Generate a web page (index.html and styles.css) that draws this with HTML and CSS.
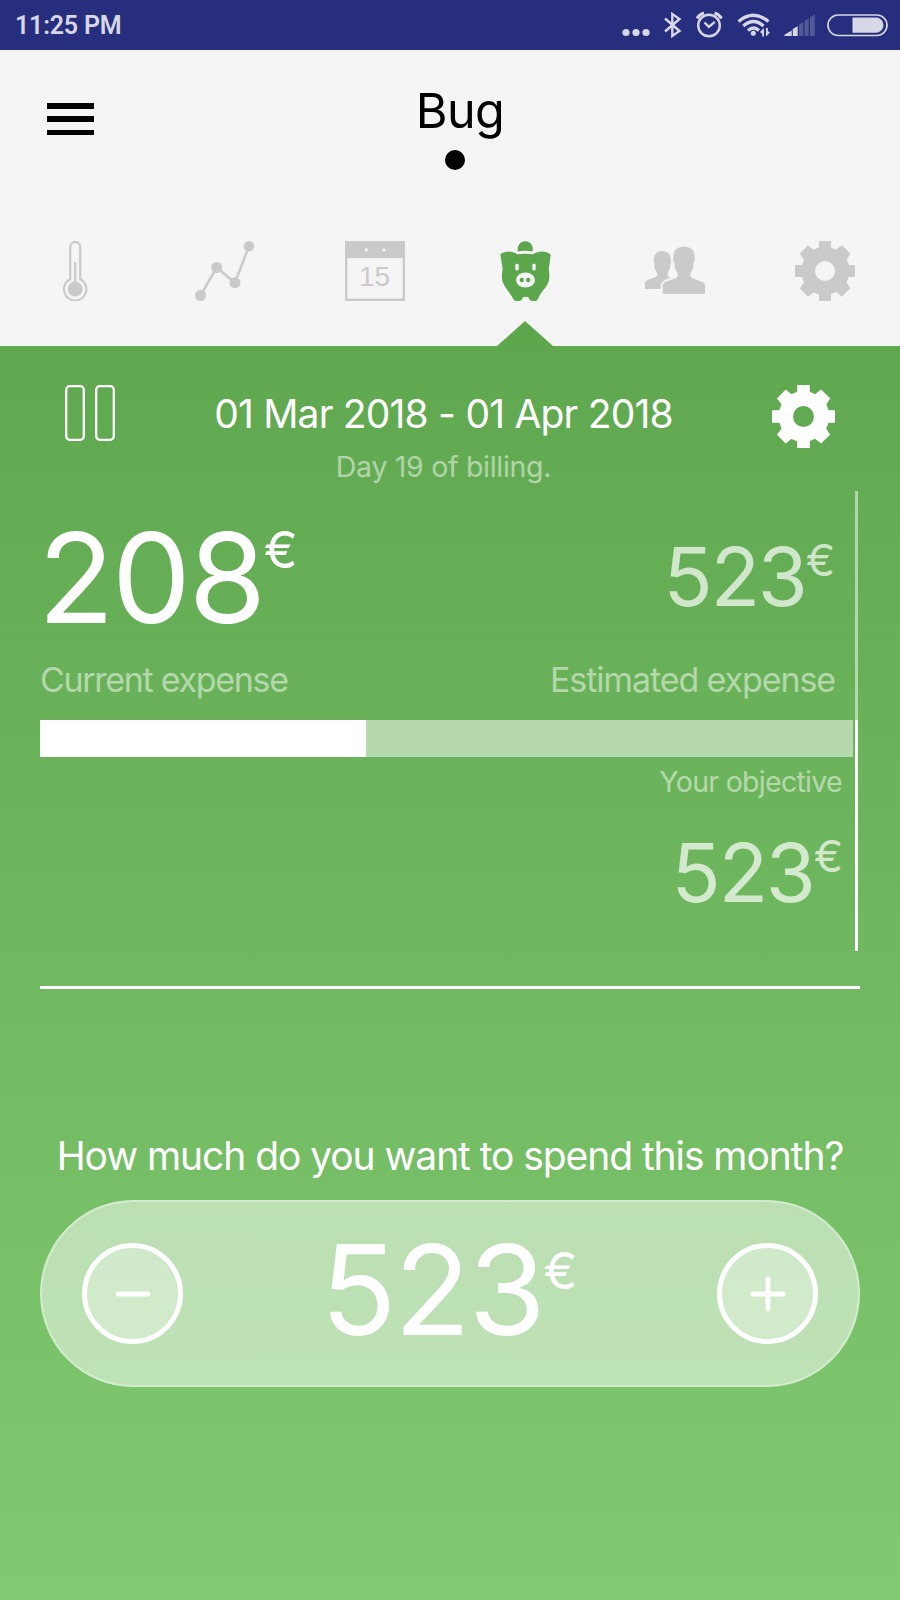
FILE: index.html
```html
<!DOCTYPE html>
<html lang="en">
<head>
  <meta charset="UTF-8" />
  <meta name="viewport" content="width=device-width, initial-scale=1" />
  <title>Bug - Expenses</title>
  <link rel="stylesheet" href="styles.css">
</head>
<body>

  <svg class="sprite" width="0" height="0">
    <symbol id="gear" viewBox="0 0 60 60">
      <path fill-rule="evenodd" d="M24 0h12v6.500l5 2.200 5.800-4.400 8.700 8.500-3.700 5.600 2 5.600H60v12h-6.200l-2.200 5.500 3.700 5.800-8.500 8.500-5.800-4.700-5 2.200V60H24v-6.400l-5.500-2.200-5.500 4.300-8.300-8.300 4.400-5.900L7 36H0V24h7l2.100-5.600-4.400-5.600L13 4.300l5.500 4.400L24 6.500zM30 20a10 10 0 1 0 0 20a10 10 0 0 0 0-20z"/>
    </symbol>
  </svg>

  <div class="status-bar">
    <div class="clock">11:25 PM</div>
    <svg class="status-icons" viewBox="0 0 280 50" width="280" height="50">
      <g fill="#d6d7e7">
        <circle cx="6" cy="32.500" r="3.600"/>
        <circle cx="16" cy="32.500" r="3.600"/>
        <circle cx="26" cy="32.500" r="3.600"/>
      </g>
      <g fill="none" stroke="#d6d7e7" stroke-width="2.400">
        <path d="M45 18.500l14.500 12.500-7.200 5V14l7.200 5L45 31.500"/>
        <circle cx="89" cy="25.500" r="10.800"/>
        <path d="M84.500 22.500l4.300 4.300 6-5"/>
        <path stroke-width="3" d="M77 18.500q2-4 7-5.500M101.500 18.500q-2-4-7-5.500"/>
        <path stroke-width="3.300" d="M118.500 21.500q14.500-12.500 30 0M123.300 26q10.200-9 20.200 0M128 30.500q5.500-5 11 0"/>
      </g>
      <circle cx="133.300" cy="33.300" r="2.500" fill="#d6d7e7"/>
      <path fill="#d6d7e7" d="M144 28v8.500h-1.800V34L140 32zM146 36.500V28h1.800v3l2.200 1.500zM164.500 36v-1.200l7.200-4.200V36zM172.800 36v-7l4.900-2.700V36z"/>
      <path fill="#535897" d="M179 36V24.500l4.200-2.300V36zM184.500 36V21l4.200-2.500V36zM190 36V17.500l4.800-3V36z"/>
      <rect x="208" y="15" width="59" height="20.500" rx="10.200" fill="none" stroke="#d6d7e7" stroke-width="1.700"/>
      <path fill="#d6d7e7" d="M232.500 17.500H257a7.700 7.700 0 0 1 0 15.200h-24.500z"/>
    </svg>
  </div>

  <div class="header">
    <div class="title-row">
      <div class="menu">
        <span></span>
        <span></span>
        <span></span>
      </div>
      <div class="title">
        <h1>Bug</h1>
        <div class="page-dot"></div>
      </div>
    </div>

    <div class="tabs">
      <div class="tab">
        <svg viewBox="0 0 60 60" width="60" height="60">
          <path fill="none" stroke="#cacaca" stroke-width="2.200" d="M25.200 38.300V6a5 5 0 0 1 10 0v32.300a11.200 11.200 0 1 1-10 0z"/>
          <path fill="none" stroke="#cacaca" stroke-width="2.200" d="M30.200 21v25"/>
          <circle cx="30.200" cy="48" r="7.500" fill="#cacaca"/>
        </svg>
      </div>
      <div class="tab">
        <svg viewBox="0 0 60 60" width="60" height="60">
          <path fill="none" stroke="#cacaca" stroke-width="2.500" d="M5.500 54.500l16.200-28 18.200 15.200L54 5.300"/>
          <g fill="#cacaca">
            <circle cx="5.500" cy="54.500" r="5.500"/>
            <circle cx="21.700" cy="26.500" r="5.500"/>
            <circle cx="40" cy="41.700" r="5.500"/>
            <circle cx="54" cy="5.300" r="5.300"/>
          </g>
        </svg>
      </div>
      <div class="tab">
        <svg viewBox="0 0 60 60" width="60" height="60">
          <rect x="1.200" y="1.200" width="57.600" height="57.600" fill="none" stroke="#cacaca" stroke-width="2.400"/>
          <path fill="#cacaca" d="M0 0h60v17H0z"/>
          <path fill="#f5f5f5" d="M20 7.500h2.800v2.800H20zM37.500 7.500h2.800v2.800h-2.800z"/>
          <text class="calendar-day" x="29.500" y="44.500" text-anchor="middle">15</text>
        </svg>
      </div>
      <div class="tab active">
        <svg viewBox="0 0 60 60" width="60" height="60">
          <g fill="#5ca64c">
            <path d="M22.700 10.500C22 4 25.500.2 30.300.2s8.300 3.800 7.500 10.300q-7.500-1.300-15.100 0z"/>
            <path d="M5.300 13.500c5-4 12-3.700 17.200-.3q7.800-1 15.500 0c5.500-3.600 12.500-3.700 17.700.4L53.700 28c.8 4 1 8 0 12.500-1.500 5-6 8.500-9.400 14.500-1.200 2.500-1.800 5-4.300 5-3.500.2-5.700-.2-6.500-3.700q-3-1-5.700 0c-.5 3.500-3 3.900-6.300 3.700-2.500 0-3.500-2.500-5-5-3.500-5.500-7.500-9.500-9-14.500-1-4.500-.8-8.500.2-12.500z"/>
          </g>
          <g fill="#f5f5f5">
            <rect x="20.300" y="22.800" width="3.400" height="6.600" rx="1.300"/>
            <rect x="37.300" y="22.800" width="3.400" height="6.600" rx="1.300"/>
            <ellipse cx="30.500" cy="39" rx="9.500" ry="7.500"/>
          </g>
          <circle cx="26.800" cy="39" r="2.200" fill="#5ca64c"/>
          <circle cx="33.200" cy="39" r="2.200" fill="#5ca64c"/>
        </svg>
      </div>
      <div class="tab">
        <svg viewBox="0 0 60 60" width="60" height="60">
          <path fill="#cacaca" d="M0 48v-6c0-3 7-4.500 10.500-6 2-1 2.200-2.500 1-5-1.500-2.500-2.300-5-2.200-8C8 21 8.700 19 9 17c.3-4.500 4-7 8.300-7s8 2.500 8.300 7c.1 2 1 4-.3 6.500 0 3-.8 5.500-2 7.500-1.300 3-.8 4.500 2.200 6-5 1-8.500 3.500-9.700 6V48z"/>
          <path fill="#cacaca" d="M18.500 53q-.7 0-.7-1v-8c0-3.500 9-5 13-7 2.500-1.300 2.500-3.500 1-6.500-1.500-2.700-2.200-5.500-2.500-9-1.500-2.500-1.200-4-.8-7 0-5.500 4.500-9 10.500-9S49.500 9 49.500 14.500c.3 3 .8 4.500-.8 7-.3 3.500-1 6.300-2.500 9-1.500 3-1.200 5.200 1 6.500 4 2 12.800 3.500 12.800 7v8q0 1-1 1z"/>
        </svg>
      </div>
      <div class="tab">
        <svg width="60" height="60" fill="#cacaca"><use href="#gear"/></svg>
      </div>
    </div>
  </div>

  <div class="content">
    <div class="period">
      <svg class="pause" viewBox="0 0 50 56" width="50" height="56" fill="none" stroke="#fff" stroke-width="2.300">
        <rect x="1.200" y="1.200" width="17.600" height="53.600" rx="3.500"/>
        <rect x="31.200" y="1.200" width="17.600" height="53.600" rx="3.500"/>
      </svg>
      <div class="period-text">
        <div class="dates">01 Mar 2018 - 01 Apr 2018</div>
        <div class="day">Day 19 of billing.</div>
      </div>
      <svg class="settings" width="63" height="63" fill="#fff"><use href="#gear"/></svg>
    </div>

    <div class="expenses">
      <div class="current">
        <div class="amount big"><span class="number">208</span><span class="euro">€</span></div>
        <div class="label">Current expense</div>
      </div>
      <div class="estimated">
        <div class="amount"><span class="number">523</span><span class="euro">€</span></div>
        <div class="label">Estimated expense</div>
      </div>
    </div>

    <div class="objective">
      <div class="bar">
        <div class="bar-fill" style="width: 40.100%"></div>
      </div>
      <div class="objective-label">Your objective</div>
      <div class="amount"><span class="number">523</span><span class="euro">€</span></div>
    </div>

    <div class="separator"></div>

    <div class="question">How much do you want to spend this month?</div>
    <div class="stepper">
      <div class="round-btn">
        <svg viewBox="0 0 36 36" width="36" height="36" stroke="#fff" stroke-width="4.800" stroke-linecap="round"><path d="M3 18h30"/></svg>
      </div>
      <div class="amount big"><span class="number">523</span><span class="euro">€</span></div>
      <div class="round-btn">
        <svg viewBox="0 0 36 36" width="36" height="36" stroke="#fff" stroke-width="4.800" stroke-linecap="round"><path d="M3 18h30M18 3v30"/></svg>
      </div>
    </div>
  </div>

</body>
</html>
```
FILE: styles.css
```css
* {
  box-sizing: border-box;
}
body {
  margin: 0;
  width: 900px;
  height: 1600px;
  display: flex;
  flex-direction: column;
  font-family: Inter, "Liberation Sans", sans-serif;
  background: #f5f5f5;
  color: #fff;
  overflow: hidden;
  white-space: nowrap;
}
svg {
  display: block;
  flex-shrink: 0;
}
.sprite {
  position: absolute;
}

/* status bar */
.status-bar {
  height: 50px;
  display: flex;
  align-items: center;
  justify-content: space-between;
  padding: 0 0 0 15px;
  background: #272e7d;
}
.clock {
  padding-top: 1px;
  font-family: Roboto, sans-serif;
  font-size: 25px;
  font-weight: 600;
  letter-spacing: -0.2px;
  color: #d6d7e7;
}

/* header */
.header {
  height: 296px;
  display: flex;
  flex-direction: column;
  justify-content: space-between;
  color: #000;
}
.title-row {
  display: flex;
  padding-top: 30px;
}
.menu {
  width: 47px;
  margin: 23px 0 0 46.500px;
  display: flex;
  flex-direction: column;
  gap: 7.600px;
}
.menu span {
  height: 5.700px;
  background: #000;
}
.title {
  width: 120px;
  margin-left: 306.500px;
  display: flex;
  flex-direction: column;
  align-items: center;
}
.title h1 {
  margin: 0;
  font-size: 48.500px;
  line-height: 61px;
  font-weight: 400;
  letter-spacing: -0.5px;
}
.page-dot {
  width: 20px;
  height: 20px;
  margin: 9px 10px 0 0;
  border-radius: 50%;
  background: #000;
}
.tabs {
  height: 105px;
  display: grid;
  grid-template-columns: repeat(6, 150px);
}
.tab {
  display: flex;
  flex-direction: column;
  align-items: center;
  justify-content: space-between;
}
.tab.active::after {
  content: "";
  border: 28px solid transparent;
  border-top: 0;
  border-bottom: 25px solid #5ca64c;
}
.calendar-day {
  font-family: "Liberation Sans", sans-serif;
  font-size: 28px;
  fill: #cacaca;
}

/* green page */
.content {
  flex: 1;
  padding: 0 40px;
  background: linear-gradient(#60a84f, #81ca71);
}
.period {
  height: 145px;
  padding: 39.400px 25px 0;
  display: flex;
  align-items: flex-start;
  justify-content: space-between;
}
.period-text {
  padding-top: 0.600px;
  text-align: center;
}
.dates {
  font-size: 39px;
  line-height: 56px;
  letter-spacing: -0.8px;
}
.day {
  font-size: 28.500px;
  line-height: 50px;
  letter-spacing: -0.3px;
  color: rgba(255, 255, 255, 0.5);
}
.expenses {
  width: 818px;
  height: 229px;
  padding-right: 20px;
  display: flex;
  justify-content: space-between;
  border-right: 3px solid rgba(255, 255, 255, 0.5);
}
.current,
.estimated {
  display: flex;
  flex-direction: column;
  justify-content: flex-end;
}
.amount {
  display: flex;
  align-items: flex-start;
  justify-content: flex-end;
  color: rgba(255, 255, 255, 0.7);
}
.amount .number {
  font-size: 81px;
  line-height: 80px;
  letter-spacing: -2.200px;
}
.amount .euro {
  padding-top: 1px;
  font-size: 44px;
  line-height: 44px;
}
.amount.big {
  justify-content: flex-start;
  color: #fff;
}
.amount.big .number {
  font-size: 125px;
  line-height: 124px;
  letter-spacing: -2.200px;
}
.amount.big .euro {
  padding-top: 8px;
  font-size: 51px;
  line-height: 51px;
}
.label {
  height: 67px;
  font-size: 34px;
  line-height: 54px;
  letter-spacing: -1.100px;
  color: rgba(255, 255, 255, 0.5);
}
.current .amount {
  height: 124px;
  margin: 0 0 13px -2px;
}
.current .label {
  letter-spacing: -1.300px;
}
.estimated .amount {
  margin-bottom: 36px;
}
.objective {
  width: 818px;
  height: 231px;
  padding-right: 2px;
  border-right: 3px solid #fff;
}
.bar {
  height: 37px;
  background: rgba(255, 255, 255, 0.5);
}
.bar-fill {
  height: 37px;
  background: #fff;
}
.objective-label {
  padding-right: 11px;
  font-size: 28.500px;
  line-height: 49px;
  letter-spacing: -0.7px;
  text-align: right;
  color: rgba(255, 255, 255, 0.5);
}
.objective .amount {
  padding: 27px 10px 0 0;
}
.separator {
  height: 3px;
  margin-top: 35px;
  background: #fff;
}
.question {
  margin: 137px -20px 0;
  font-size: 39px;
  line-height: 60px;
  letter-spacing: -1.070px;
  text-align: center;
}
.stepper {
  height: 187px;
  margin-top: 14px;
  padding: 0 40px;
  display: flex;
  align-items: center;
  justify-content: space-between;
  border: 2px solid rgba(255, 255, 255, 0.35);
  border-radius: 94px;
  background: rgba(255, 255, 255, 0.5);
}
.stepper .amount {
  margin: -7px 2px 0 0;
}
.stepper .amount.big .euro {
  padding-top: 17px;
}
.round-btn {
  width: 101px;
  height: 101px;
  display: flex;
  align-items: center;
  justify-content: center;
  border: 5.500px solid #fff;
  border-radius: 50%;
  background: rgba(255, 255, 255, 0.3);
}
```
